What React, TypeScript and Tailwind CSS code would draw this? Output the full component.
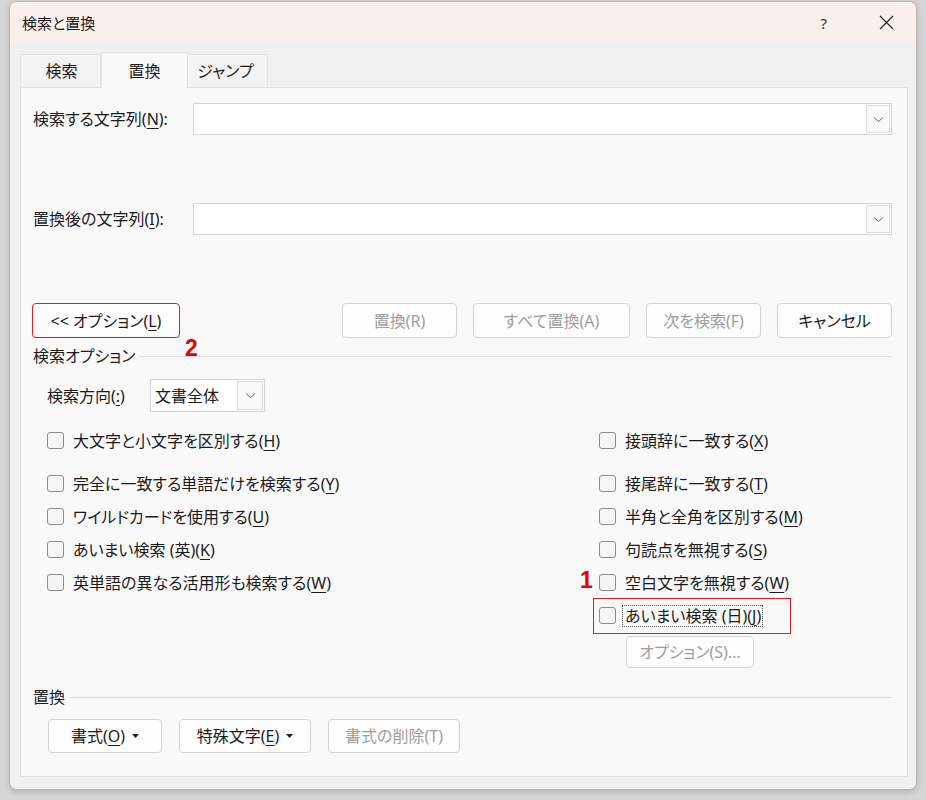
import React from "react";

const Chev = () => (
  <svg width="11" height="7" viewBox="0 0 11 7">
    <path d="M1 1.5l4.5 4 4.5-4" stroke="#6f6f6f" fill="none" strokeWidth="1" />
  </svg>
);

const U = ({ c }: { c: string }) => (
  <span className="underline underline-offset-[3px] decoration-1">{c}</span>
);

const Btn = ({
  children,
  w,
  disabled,
  red,
}: {
  children: React.ReactNode;
  w: string;
  disabled?: boolean;
  red?: boolean;
}) => (
  <div
    className={
      "flex items-center justify-center rounded-[4px] border bg-[#fdfdfd] " +
      w +
      (red ? " border-[#e31a1a]" : " border-[#d4d4d4]") +
      (disabled ? " text-[#9d9d9d]" : " text-[#1b1b1b]")
    }
  >
    {children}
  </div>
);

const Box = () => (
  <div className="h-[17px] w-[17px] shrink-0 rounded-[3px] border border-[#8c8c8c] bg-[#f6f6f6]" />
);

const Check = ({ children }: { children: React.ReactNode }) => (
  <div className="flex h-[33px] items-center gap-[9px]">
    <Box />
    <span>{children}</span>
  </div>
);

const Caret = () => (
  <svg width="7" height="4" viewBox="0 0 7 4" className="ml-[7px]">
    <path d="M0 0h7L3.5 4z" fill="#222" />
  </svg>
);

export default function App() {
  return (
    <div className="h-[800px] w-[926px] bg-[#d6d6d6] pl-[9px] pt-[1px] font-['Noto_Sans','Noto_Sans_CJK_JP',sans-serif] text-[16px] leading-[20px] text-[#1b1b1b] [font-feature-settings:'palt']">
      <div className="flex h-[789px] w-[908px] flex-col overflow-hidden rounded-[8px] border border-[#b9b9b9] bg-[#f0f0f0] shadow-[0_2px_6px_rgba(0,0,0,0.18)]">
        {/* title bar */}
        <div className="flex h-[41px] shrink-0 items-center bg-[#f9f0eb] pl-[12px] pr-[22px] text-[15px]">
          <span>検索と置換</span>
          <span className="ml-auto mr-[52px] text-[15px] text-[#333]">?</span>
          <svg width="15" height="15" viewBox="0 0 15 15">
            <path d="M1 1l13 13M14 1L1 14" stroke="#222" strokeWidth="1.1" />
          </svg>
        </div>

        {/* body */}
        <div className="flex flex-col pl-[10px] pt-[9px]">
          {/* tabs */}
          <div className="flex h-[35px] items-end">
            <div className="flex h-[33px] w-[81px] items-center justify-center border border-b-0 border-[#e2e2e2] bg-[#f3f3f3] pl-[2px]">
              検索
            </div>
            <div className="relative z-10 -mb-px flex h-[36px] w-[87px] items-center justify-center border border-b-0 border-[#e2e2e2] bg-[#f9f9f9]">
              置換
            </div>
            <div className="flex h-[33px] w-[80px] items-center justify-center border border-b-0 border-l-0 border-[#e2e2e2] bg-[#f3f3f3] pr-[4px]">
              ジャンプ
            </div>
          </div>

          {/* panel */}
          <div className="relative flex h-[690px] w-[888px] flex-col border border-[#e2e2e2] bg-[#f9f9f9] pl-[12px] pr-[15px] pt-[15px]">
            {/* find */}
            <div className="flex h-[32px] items-center">
              <div className="w-[160px]">
                検索する文字列(<U c="N" />):
              </div>
              <div className="flex h-[32px] flex-1 items-center justify-end border border-[#d4d4d4] bg-white pr-[1px]">
                <div className="flex h-[28px] w-[24px] items-center justify-center border border-[#dcdcdc] bg-[#f9f9f9]">
                  <Chev />
                </div>
              </div>
            </div>
            {/* replace */}
            <div className="mt-[68px] flex h-[32px] items-center">
              <div className="w-[160px]">
                置換後の文字列(<U c="I" />):
              </div>
              <div className="flex h-[32px] flex-1 items-center justify-end border border-[#d4d4d4] bg-white pr-[1px]">
                <div className="flex h-[28px] w-[24px] items-center justify-center border border-[#dcdcdc] bg-[#f9f9f9]">
                  <Chev />
                </div>
              </div>
            </div>

            {/* buttons */}
            <div className="-ml-px mt-[68px] flex h-[35px] items-stretch">
              <Btn w="w-[148px]" red>
                &lt;&lt; オプション(<U c="L" />)
              </Btn>
              <div className="ml-auto flex gap-[16px]">
                <Btn w="w-[115px]" disabled>
                  置換(R)
                </Btn>
                <Btn w="w-[157px]" disabled>
                  すべて置換(A)
                </Btn>
                <Btn w="w-[115px]" disabled>
                  次を検索(F)
                </Btn>
                <Btn w="w-[115px]">キャンセル</Btn>
              </div>
            </div>

            {/* search options group */}
            <div className="mt-[8px] flex h-[20px] items-center">
              <span>検索オプション</span>
              <div className="ml-[4px] h-px flex-1 bg-[#dcdcdc]" />
            </div>

            <div className="ml-[14px] mt-[13px] flex h-[33px] items-center">
              <span className="w-[103px]">
                検索方向(<U c=":" />)
              </span>
              <div className="flex h-[33px] w-[115px] items-center border border-[#d4d4d4] bg-white pl-[4px] pr-[1px]">
                <span className="flex-1">文書全体</span>
                <div className="flex h-[29px] w-[26px] items-center justify-center border border-[#dcdcdc] bg-[#f9f9f9]">
                  <Chev />
                </div>
              </div>
            </div>

            <div className="ml-[14px] mt-[12px] flex">
              <div className="w-[552px]">
                <Check>
                  大文字と小文字を区別する(<U c="H" />)
                </Check>
                <div className="mt-[10px]" />
                <Check>
                  完全に一致する単語だけを検索する(<U c="Y" />)
                </Check>
                <Check>
                  ワイルドカードを使用する(<U c="U" />)
                </Check>
                <Check>
                  あいまい検索 (英)(<U c="K" />)
                </Check>
                <Check>
                  英単語の異なる活用形も検索する(<U c="W" />)
                </Check>
              </div>
              <div className="flex flex-col">
                <Check>
                  接頭辞に一致する(<U c="X" />)
                </Check>
                <div className="mt-[10px]" />
                <Check>
                  接尾辞に一致する(<U c="T" />)
                </Check>
                <Check>
                  半角と全角を区別する(<U c="M" />)
                </Check>
                <Check>
                  句読点を無視する(<U c="S" />)
                </Check>
                <Check>
                  空白文字を無視する(<U c="W" />)
                </Check>
                <div className="relative flex h-[33px] items-center gap-[9px]">
                  <div className="absolute -left-[6px] top-[-1px] h-[36px] w-[198px] border border-[#e31a1a]" />
                  <div className="absolute -left-[19px] -top-[29px] font-['Liberation_Sans',sans-serif] text-[23px] font-bold text-[#e60000]">
                    1
                  </div>
                  <Box />
                  <span className="outline-1 outline-dotted outline-[#555] -ml-[2px] pl-[2px] pr-[1px]">
                    あいまい検索 (日)(<U c="J" />)
                  </span>
                </div>
                <div className="ml-[27px] mt-[4px] flex h-[32px]">
                  <Btn w="w-[128px]" disabled>
                    オプション(S)...
                  </Btn>
                </div>
              </div>
            </div>

            {/* replace group */}
            <div className="mt-[19px] flex h-[20px] items-center">
              <span>置換</span>
              <div className="ml-[4px] h-px flex-1 bg-[#dcdcdc]" />
            </div>
            <div className="ml-[15px] mt-[12px] flex h-[34px] gap-[17px]">
              <Btn w="w-[114px]">
                書式(<U c="O" />)
                <Caret />
              </Btn>
              <Btn w="w-[132px]">
                特殊文字(<U c="E" />)
                <Caret />
              </Btn>
              <Btn w="w-[132px]" disabled>
                書式の削除(T)
              </Btn>
            </div>

            <div className="absolute left-[164px] top-[250px] font-['Liberation_Sans',sans-serif] text-[23px] font-bold text-[#e60000]">
              2
            </div>
          </div>
        </div>
      </div>
    </div>
  );
}
